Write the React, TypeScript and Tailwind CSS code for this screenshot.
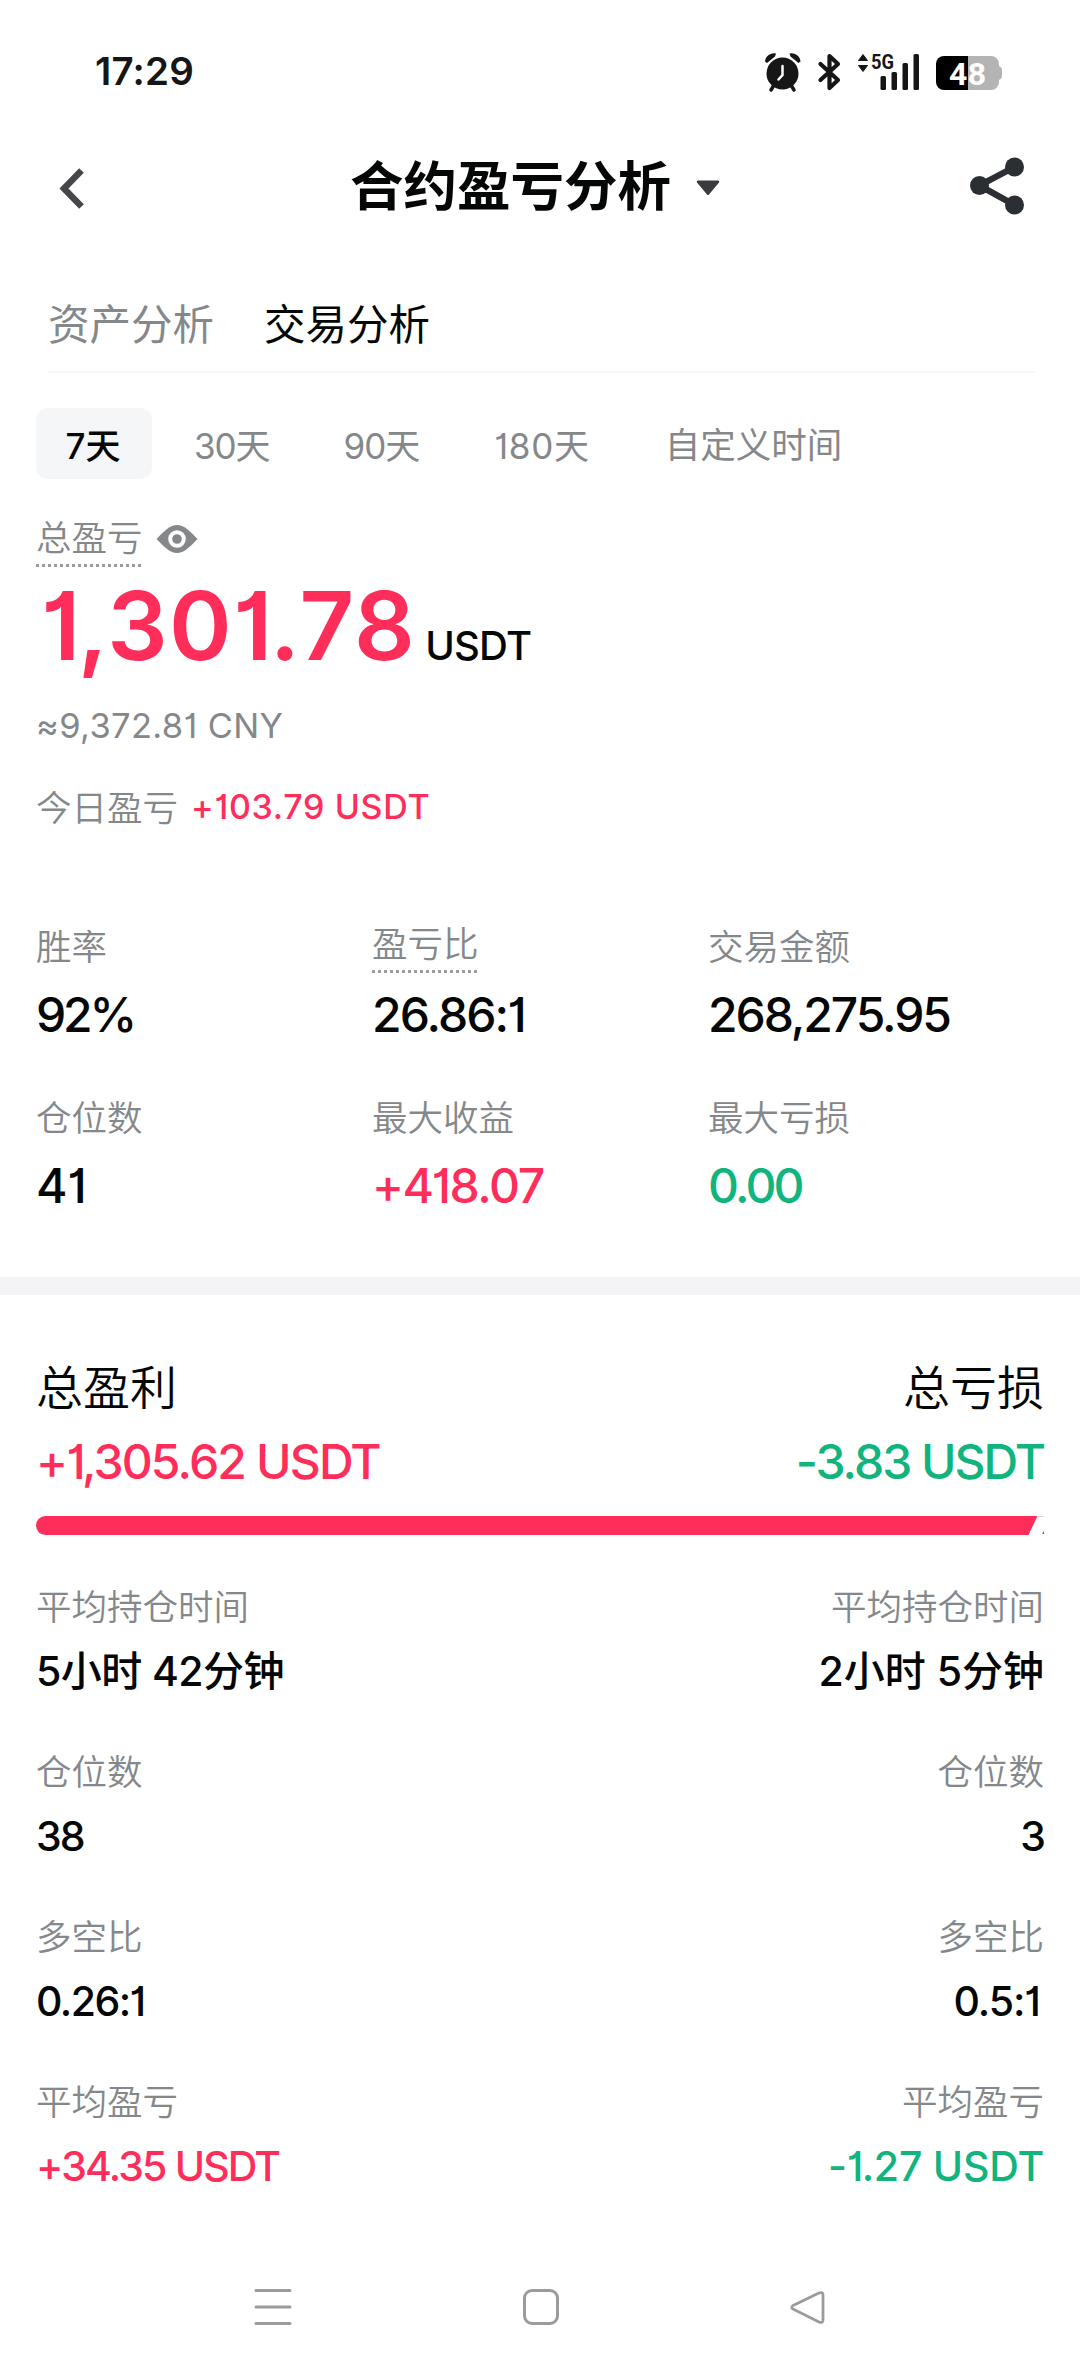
import type { ReactNode } from 'react';
import clsx from 'clsx';

type Tone = 'up' | 'down' | 'plain';

interface Stat {
  label: string;
  value: string;
  tone?: Tone;
  hint?: boolean;
  tracking?: string;
}

const toneClass: Record<Tone, string> = {
  up: 'text-[#ff2d5a]',
  down: 'text-[#10b47c]',
  plain: 'text-[#050707]',
};

const ranges = [
  { label: '7天', className: 'w-[116px] bg-[#f4f6f7] pr-[2px] text-[#050707] font-medium' },
  { label: '30天', className: 'ml-[42px] tracking-[-0.03em]' },
  { label: '90天', className: 'ml-[74px] tracking-[-0.03em]' },
  { label: '180天', className: 'ml-[75px] tracking-[0.02em]' },
  { label: '自定义时间', className: 'ml-[75px] text-[35.500px]' },
];

const stats: Stat[] = [
  { label: '胜率', value: '92%', tracking: 'tracking-[-0.065em]' },
  { label: '盈亏比', value: '26.86:1', hint: true, tracking: 'tracking-[-0.04em]' },
  { label: '交易金额', value: '268,275.95', tracking: 'tracking-[-0.043em]' },
  { label: '仓位数', value: '41', tracking: 'tracking-[0.02em]' },
  { label: '最大收益', value: '+418.07', tone: 'up', tracking: 'tracking-[-0.03em]' },
  { label: '最大亏损', value: '0.00', tone: 'down', tracking: 'tracking-[-0.058em]' },
];

const compareRows: [Stat, Stat][] = [
  [
    { label: '平均持仓时间', value: '5小时 42分钟', tracking: 'tracking-[-0.014em]' },
    { label: '平均持仓时间', value: '2小时 5分钟' },
  ],
  [
    { label: '仓位数', value: '38', tracking: 'tracking-[-0.05em]' },
    { label: '仓位数', value: '3', tracking: 'tracking-[-0.05em]' },
  ],
  [
    { label: '多空比', value: '0.26:1', tracking: 'tracking-[-0.038em]' },
    { label: '多空比', value: '0.5:1', tracking: 'tracking-[-0.025em] pr-[4px]' },
  ],
  [
    { label: '平均盈亏', value: '+34.35 USDT', tone: 'up', tracking: 'tracking-[-0.045em]' },
    { label: '平均盈亏', value: '-1.27 USDT', tone: 'down', tracking: 'tracking-[-0.005em]' },
  ],
];

function DottedLabel({ children }: { children: ReactNode }) {
  return (
    <div className="w-fit">
      <div className="h-[52px] leading-[53px]">{children}</div>
      <div className="h-[3px] bg-[repeating-linear-gradient(90deg,#9a9c9e_0_3px,transparent_3px_6px)]" />
    </div>
  );
}

function StatusBar() {
  return (
    <div className="flex h-[143px] items-center justify-between pl-[95px] pr-[77px]">
      <span className="text-[38.500px] font-semibold tracking-[0.005em] text-[#161616]">17:29</span>
      <svg width="240" height="44" viewBox="763 50 240 44" fill="#161616">
        {/* alarm clock */}
        <circle cx="782.5" cy="73.5" r="16" />
        <path d="M765 61.500a9 9 0 0 1 11-8l-1 3-8 6.500zM800.500 61.500a9 9 0 0 0-11-8l1 3 8 6.500z" />
        <path d="M774 85l-3 5M791 85l3 5" stroke="#161616" strokeWidth="3.500" strokeLinecap="round" />
        <path d="M782.500 66v9l-4 4.500" fill="none" stroke="#fff" strokeWidth="2.500" strokeLinecap="round" />
        {/* bluetooth */}
        <path
          d="M820.500 64l17.500 16-8.500 8V56l8.500 8-17.500 16"
          fill="none"
          stroke="#161616"
          strokeWidth="4.200"
          strokeLinecap="round"
          strokeLinejoin="round"
        />
        {/* mobile signal */}
        <path d="M858.500 62h9l-4.500-6zM858.500 67h9l-4.500 6z" transform="translate(0 -1.500)" stroke="#161616" strokeWidth="1" strokeLinejoin="round" />
        <text x="871" y="69" fontSize="21" fontWeight="700" fontFamily="Roboto, sans-serif" textLength="23" lengthAdjust="spacingAndGlyphs">
          5G
        </text>
        <rect x="880.500" y="76" width="5.500" height="14" rx="1.500" />
        <rect x="891.500" y="72" width="5.500" height="18" rx="1.500" />
        <rect x="902.500" y="63" width="5.500" height="27" rx="1.500" />
        <rect x="913.500" y="54" width="5.500" height="36" rx="1.500" />
        {/* battery */}
        <path d="M945 56h46a8 8 0 0 1 8 8v2c1.500 1 3 1.500 3 4v6c0 2.500-1.500 3-3 4v2a8 8 0 0 1-8 8h-23V56z" fill="#b4b4b4" />
        <path d="M968 56v34h-24a8 8 0 0 1-8-8V64a8 8 0 0 1 8-8z" fill="#000" />
        <text x="949" y="84.500" fontSize="32" fontWeight="700" fontFamily="Roboto, sans-serif" fill="#fff" textLength="37">
          48
        </text>
      </svg>
    </div>
  );
}

function Header() {
  return (
    <div className="flex h-[84px] items-center justify-between pl-[59px] pr-[55px]">
      <svg width="26" height="42" viewBox="0 0 26 42" fill="none" stroke="#45474a" strokeWidth="6.500" className="mt-[8px]">
        <path d="M22.500 2.500L5 20.500l17.500 18" />
      </svg>
      <div className="ml-[16px] flex items-center">
        <h1 className="pt-[3px] text-[53.500px] font-bold leading-[84px] text-[#050707]">合约盈亏分析</h1>
        <svg width="24" height="16" viewBox="0 0 24 16" fill="#3a3b3f" className="ml-[25px] mt-[5px]">
          <path d="M2 .5h20c1 0 1.500 1 1 2L13 14.500q-1 1-2 0L1 2.500c-.5-1 0-2 1-2z" />
        </svg>
      </div>
      <svg width="56" height="58" viewBox="968 157 56 58" fill="#2b2f33" className="mt-[2px]">
        <path d="M1013.500 167l-35 18.500 35 19.500" fill="none" stroke="#2b2f33" strokeWidth="6.500" />
        <circle cx="1013.500" cy="167" r="9.500" />
        <circle cx="978.500" cy="185.500" r="9.500" />
        <circle cx="1013.500" cy="205" r="9.500" />
      </svg>
    </div>
  );
}

function StatCell({ stat }: { stat: Stat }) {
  return (
    <div>
      <div className="h-[56px] text-[35.500px] font-[350] text-[#85888a]">
        {stat.hint ? <DottedLabel>{stat.label}</DottedLabel> : <div className="leading-[59px]">{stat.label}</div>}
      </div>
      <div className={clsx('mt-[11px] h-[59px] text-[48px] font-medium leading-[60px]', stat.tracking, toneClass[stat.tone ?? 'plain'])}>
        {stat.value}
      </div>
    </div>
  );
}

function CompareCell({ stat }: { stat: Stat }) {
  return (
    <div>
      <div className="h-[50px] text-[35.500px] font-[350] leading-[54px] text-[#85888a]">{stat.label}</div>
      <div className={clsx('mt-[14px] h-[50px] text-[41px] font-medium leading-[52px]', stat.tracking, toneClass[stat.tone ?? 'plain'])}>
        {stat.value}
      </div>
    </div>
  );
}

function SystemNav() {
  return (
    <div className="mt-auto flex h-[132px] items-center justify-between pl-[254px] pr-[255px]">
      <svg width="38" height="38" viewBox="0 0 38 38" stroke="#9b9b9b" strokeWidth="3" strokeLinecap="round">
        <path d="M2 2.500h34M2 19h34M2 35.500h34" />
      </svg>
      <div className="size-[36px] rounded-[9px] border-[3px] border-[#9b9b9b]" />
      <svg width="35" height="35" viewBox="0 0 35 35" fill="none" stroke="#9b9b9b" strokeWidth="2.800" strokeLinejoin="round">
        <path d="M3 15.500L29 3q4-1.500 4 2v25q0 3.500-4 2L3 19q-2.500-1.500 0-3.500z" />
      </svg>
    </div>
  );
}

export default function App() {
  return (
    <div className="flex h-[2373px] w-[1080px] flex-col overflow-hidden whitespace-nowrap bg-white font-['Inter','Noto_Sans_CJK_SC',sans-serif]">
      <StatusBar />
      <Header />

      <div className="ml-[48px] mr-[44px] flex h-[146px] gap-[50px] border-b-2 border-[#f7f8f9] pt-[53px] text-[41.500px] leading-[90px]">
        <span className="text-[#85888a]">资产分析</span>
        <span className="text-[#050707]">交易分析</span>
      </div>

      {/* figures below the tabs use the 1 with a flat flag */}
      <div className="flex flex-1 flex-col [font-feature-settings:'cv01']">
        <div className="mt-[35px] flex px-[36px] text-[35px] text-[#85888a]">
          {ranges.map((range) => (
            <div key={range.label} className={clsx('h-[71px] rounded-[12px] text-center leading-[76px]', range.className)}>
              {range.label}
            </div>
          ))}
        </div>

        <section className="px-[36px]">
          <div className="mt-[33px] flex text-[35.500px] font-[350] text-[#85888a]">
            <DottedLabel>总盈亏</DottedLabel>
            <svg width="42" height="28" viewBox="0 0 42 28" className="ml-[13px] mt-[13px]">
              <path d="M.5 14Q6 8 11 4q10-8 20 0 5 4 10.500 10Q36 20 31 24q-10 8-20 0Q6 20 .5 14z" fill="#85888a" />
              <circle cx="21" cy="14" r="6.800" fill="#85888a" stroke="#fff" strokeWidth="4" />
            </svg>
          </div>

          <div className="mt-[19px] flex h-[80px] items-baseline pl-[5px] leading-[80px]">
            <span className="text-[95px] font-semibold tracking-[0.014em] text-[#ff2d5a]">1,301.78</span>
            <span className="ml-[9px] text-[40px] font-medium leading-[40px] tracking-[-0.02em] text-[#050707]">USDT</span>
          </div>
          <div className="mt-[35px] text-[34.500px] leading-[50px] tracking-[0.01em] text-[#85888a]">≈9,372.81 CNY</div>
          <div className="mt-[31px] flex h-[49px] text-[35.500px] leading-[50px]">
            <span className="font-[350] leading-[53px] text-[#85888a]">今日盈亏</span>
            <span className="ml-[13px] text-[34px] font-medium tracking-[0.02em] text-[#ff2d5a]">+103.79 USDT</span>
          </div>

          <div className="mt-[87px] grid grid-cols-3 gap-y-[45px]">
            {stats.map((stat) => (
              <StatCell key={stat.label} stat={stat} />
            ))}
          </div>
        </section>

        <div className="mt-[62px] h-[18px] bg-[#f4f4f6]" />

        <section className="px-[36px] pt-[56px]">
          <div className="flex h-[70px] justify-between text-[47px] font-[350] leading-[73px] text-[#050707]">
            <span>总盈利</span>
            <span>总亏损</span>
          </div>
          <div className="mt-[10px] flex h-[60px] justify-between text-[48px] font-medium leading-[61px]">
            <span className="tracking-[-0.038em] text-[#ff2d5a]">+1,305.62 USDT</span>
            <span className="tracking-[-0.042em] text-[#10b47c]">-3.83 USDT</span>
          </div>

          <svg width="1008" height="19" viewBox="0 0 1008 19" className="mt-[25px]">
            <path d="M9.500 0H1001.500L992.500 19H9.500a9.500 9.500 0 0 1 0-19z" fill="#ff2d5a" />
            <path d="M1001 .4h6.500" stroke="#c9c9cb" strokeWidth=".8" />
            <path d="M1008 15v3h-2z" fill="#c2405c" />
          </svg>

          <div className="mt-[46px] flex flex-col gap-[51px]">
            {compareRows.map(([profit, loss]) => (
              <div key={profit.label} className="flex justify-between">
                <CompareCell stat={profit} />
                <div className="text-right">
                  <CompareCell stat={loss} />
                </div>
              </div>
            ))}
          </div>
        </section>

        <SystemNav />
      </div>
    </div>
  );
}
